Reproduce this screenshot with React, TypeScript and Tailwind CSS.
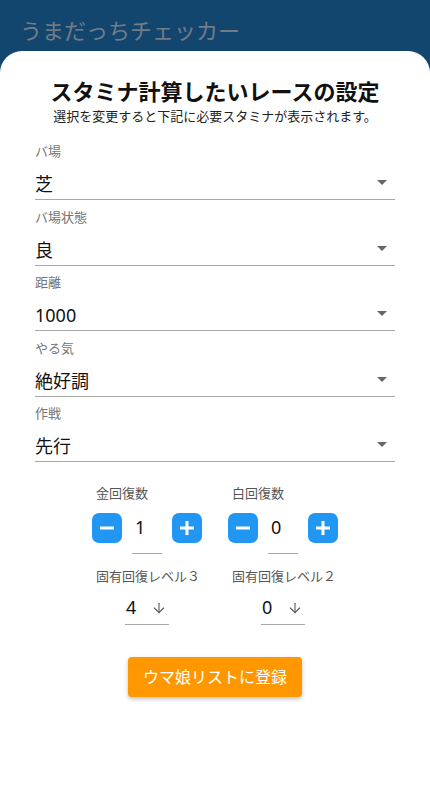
import { ArrowDown } from "lucide-react";

const fields = [
    { label: "バ場", value: "芝" },
    { label: "バ場状態", value: "良" },
    { label: "距離", value: "1000" },
    { label: "やる気", value: "絶好調" },
    { label: "作戦", value: "先行" },
];

function SelectField({ label, value }: { label: string; value: string }) {
    return (
        <div className="mb-[8.5px]">
            <div className="h-4 text-[13px] leading-4 text-[#757575]">{label}</div>
            <div className="flex h-[41px] items-end justify-between border-b border-[#a8a8a8] pb-[2px]">
                <span className="text-[18px] leading-[26px] text-[#111]">{value}</span>
                <svg width="10" height="5" viewBox="0 0 10 5" className="mb-[12px] mr-[8px]">
                    <path d="M0 0 L10 0 L5 5 Z" fill="#666" />
                </svg>
            </div>
        </div>
    );
}

function RoundButton({ plus }: { plus?: boolean }) {
    return (
        <button className="flex h-[30px] w-[30px] items-center justify-center rounded-[7px] bg-[#2196f3]">
            <svg width="16" height="16" viewBox="0 0 16 16">
                <path d="M1 8 H15" stroke="white" strokeWidth="3" />
                {plus && <path d="M8 1 V15" stroke="white" strokeWidth="3" />}
            </svg>
        </button>
    );
}

function Counter({ label, value, level, levelValue }: { label: string; value: string; level: string; levelValue: string }) {
    return (
        <div className="flex w-[110px] flex-col">
            <div className="pl-1 text-[13px] leading-4 text-[#555]">{label}</div>
            <div className="mt-[1px] flex items-center gap-[10px]">
                <RoundButton />
                <div className="flex h-[52px] w-[30px] items-center border-b border-[#a8a8a8] pl-[3px] text-[18px] text-[#111]">
                    {value}
                </div>
                <RoundButton plus />
            </div>
            <div className="mt-[14px] whitespace-nowrap pl-1 text-[13px] leading-4 text-[#555]">{level}</div>
            <div className="mx-auto mt-[7px] flex h-[34px] w-[44px] items-center justify-between border-b border-[#a8a8a8] pl-[1px] pr-[2px]">
                <span className="text-[18px] text-[#111]">{levelValue}</span>
                <ArrowDown size={16} strokeWidth={1.6} color="#555" />
            </div>
        </div>
    );
}

export default function App() {
    return (
        <div
            className="min-h-[800px] bg-[#12466f]"
            style={{ fontFamily: "'Noto Sans', 'Noto Sans CJK JP', sans-serif" }}
        >
            <div className="flex h-[51px] items-end pb-[4px] pl-[20px] text-[22px] text-[#737c85]">
                うまだっちチェッカー
            </div>
            <div className="min-h-[749px] rounded-t-[22px] bg-white px-[35px] pt-[25px]">
                <h1 className="text-center text-[22px] font-bold leading-[30px] text-[#111]">
                    スタミナ計算したいレースの設定
                </h1>
                <p className="text-center text-[13px] leading-[20px] text-[#222]">
                    選択を変更すると下記に必要スタミナが表示されます。
                </p>
                <div className="mt-[17px]">
                    {fields.map((f) => (
                        <SelectField key={f.label} label={f.label} value={f.value} />
                    ))}
                </div>
                <div className="mt-[23px] flex justify-center gap-[26px]">
                    <Counter label="金回復数" value="1" level="固有回復レベル３" levelValue="4" />
                    <Counter label="白回復数" value="0" level="固有回復レベル２" levelValue="0" />
                </div>
                <div className="mt-[32px] flex justify-center">
                    <button className="h-[40px] w-[174px] rounded-[4px] bg-[#ff9800] text-[16px] text-white shadow-[0_2px_4px_rgba(0,0,0,0.25)]">
                        ウマ娘リストに登録
                    </button>
                </div>
            </div>
        </div>
    );
}
